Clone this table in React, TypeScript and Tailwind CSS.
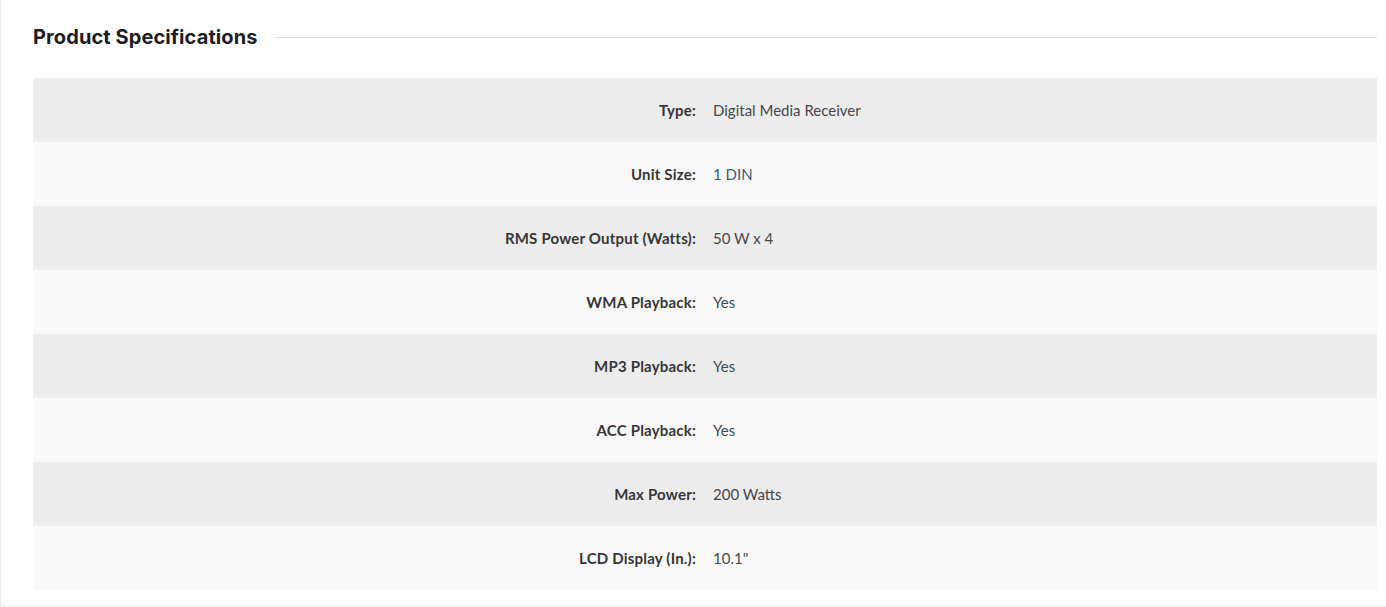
const specs: { label: string; value: string; link?: boolean }[] = [
  { label: "Type:", value: "Digital Media Receiver" },
  { label: "Unit Size:", value: "1 DIN", link: true },
  { label: "RMS Power Output (Watts):", value: "50 W x 4" },
  { label: "WMA Playback:", value: "Yes" },
  { label: "MP3 Playback:", value: "Yes" },
  { label: "ACC Playback:", value: "Yes" },
  { label: "Max Power:", value: "200 Watts" },
  { label: "LCD Display (In.):", value: '10.1"' },
];

export default function App() {
  return (
    <div className="min-h-[607px] bg-white">
      <div className="border-l border-b border-[#ebebeb] pl-8 pr-[9px] pt-[22px] pb-4">
        <div className="flex h-[30px] items-center gap-4">
          <h2 className="whitespace-nowrap font-['Inter',sans-serif] text-[20px] font-bold tracking-[0.1px] text-[#1c1c24]">
            Product Specifications
          </h2>
          <div className="h-px flex-1 bg-[#e0e0e0]" />
        </div>
        <table className="mt-[26px] w-full border-collapse font-['Lato',sans-serif] text-[15px]">
          <tbody>
            {specs.map((s, i) => (
              <tr
                key={s.label}
                className={i % 2 === 0 ? "h-16 bg-[#ededed]" : "h-16 bg-[#fafafa]"}
              >
                <td className="w-1/2 pr-[9px] text-right font-bold tracking-[0.2px] text-[#363636]">
                  {s.label}
                </td>
                <td className={s.link ? "pl-2 text-[#3c5a78]" : "pl-2 text-[#474747]"}>
                  {s.value}
                </td>
              </tr>
            ))}
          </tbody>
        </table>
      </div>
    </div>
  );
}
